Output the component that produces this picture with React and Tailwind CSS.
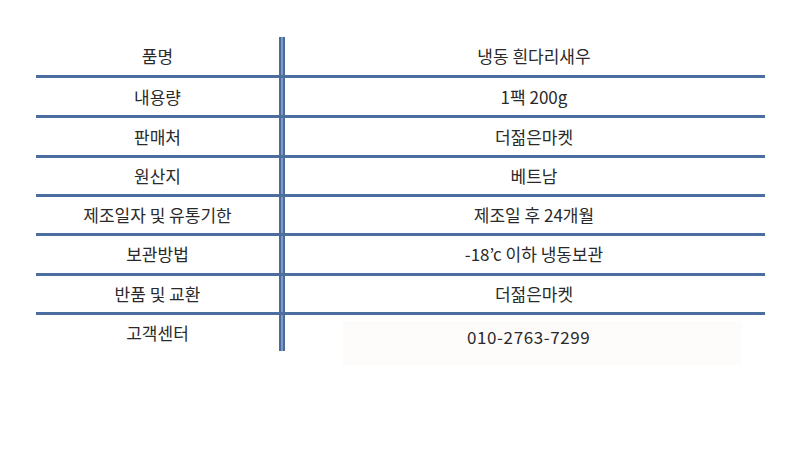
import React from 'react';

// Product info table: label column, double blue rule, value column
const rows = [
  { label: '품명', value: '냉동 흰다리새우', h: 'h-[38px]' },
  { label: '내용량', value: '1팩 200g', h: 'h-[37px]' },
  { label: '판매처', value: '더젊은마켓', h: 'h-[36.5px]' },
  { label: '원산지', value: '베트남', h: 'h-[36px]' },
  { label: '제조일자 및 유통기한', value: '제조일 후 24개월', h: 'h-[36px]' },
  { label: '보관방법', value: '-18’c 이하 냉동보관', h: 'h-[37px]' },
  { label: '반품 및 교환', value: '더젊은마켓', h: 'h-[36px]' },
];

const Divider = () => (
  <div className="w-[6px] self-stretch border-x-2 border-[#4a6a9c] bg-[#7f9bc3]" />
);

const App = () => (
  <div
    className="w-[800px] h-[453px] bg-white text-[#2a2a2a] text-[17px] pt-[37px] pl-[36px]"
    style={{ fontFamily: '"Noto Sans CJK KR", "Noto Sans", sans-serif' }}
  >
    <div className="w-[729px]">
      {rows.map((r) => (
        <div key={r.label} className="flex border-b-[3px] border-[#4b6d9f]">
          <div className={`w-[243px] ${r.h} flex items-center justify-center`}>{r.label}</div>
          <Divider />
          <div className={`flex-1 ${r.h} flex items-center justify-center pl-[18px]`}>{r.value}</div>
        </div>
      ))}
      <div className="flex items-start">
        <div className="w-[243px] h-[36px] flex items-center justify-center">고객센터</div>
        <div className="w-[6px] h-[36px] border-x-2 border-[#4a6a9c] bg-[#7f9bc3]" />
        <div className="flex-1 pt-[6px] pl-[58px]">
          <div className="w-[399px] h-[44px] bg-[#fdfcfb] pl-[124px] pt-[5px] leading-[22px] tracking-[0.6px]">
            010-2763-7299
          </div>
        </div>
      </div>
    </div>
  </div>
);

export default App;
